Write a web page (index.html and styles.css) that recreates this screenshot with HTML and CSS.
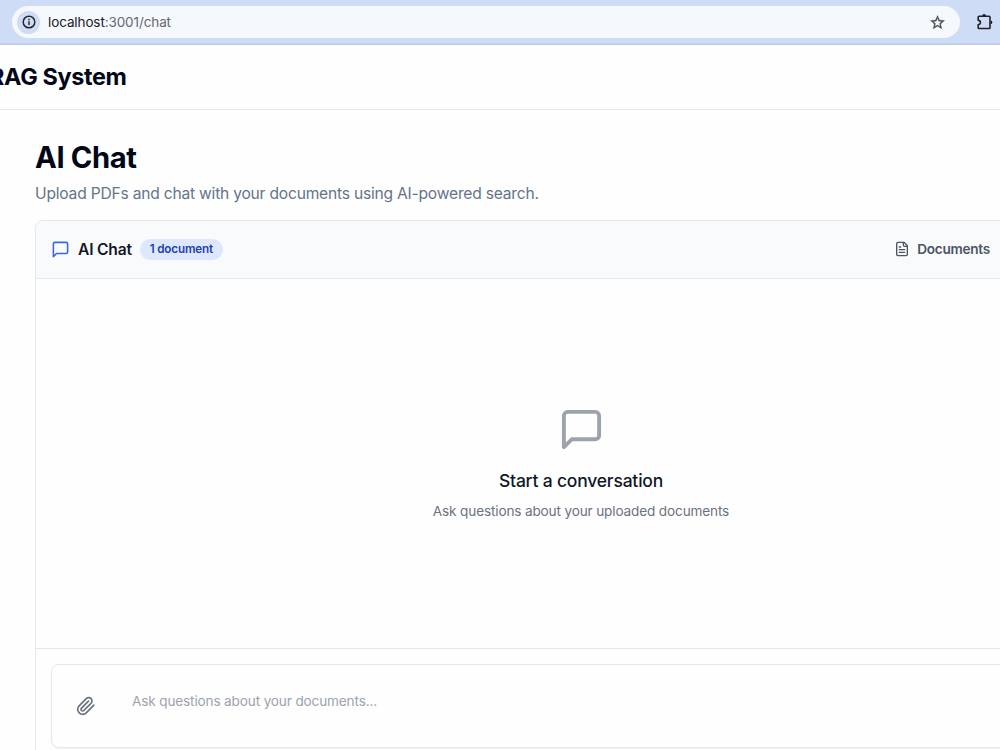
FILE: index.html
```html
<!DOCTYPE html>
<html lang="en">

<head>
    <meta charset="utf-8">
    <title>RAG System</title>
    <link rel="stylesheet" href="styles.css">
</head>

<body>

    <div class="toolbar">
        <div class="address">
            <span class="info">
                <svg width="14" height="14" viewBox="0 0 14 14" fill="none" stroke="#26282c" stroke-width="1.5">
                    <circle cx="7" cy="7" r="5.8" />
                    <path d="M7 6.3v3.600M7 3.800v1.500" />
                </svg>
            </span>
            <span class="url"><b>localhost</b>:3001/chat</span>
            <svg class="star" width="17" height="17" viewBox="0 0 24 24" fill="#4b4e53" stroke="#4b4e53" stroke-width=".4">
                <path d="M22 9.24l-7.19-.62L12 2 9.19 8.63 2 9.24l5.46 4.73L5.82 21 12 17.27 18.18 21l-1.63-7.03L22 9.24zM12 15.4l-3.76 2.27 1-4.28-3.32-2.88 4.38-.38L12 6.1l1.71 4.04 4.38.38-3.32 2.88 1 4.28L12 15.4z" />
            </svg>
        </div>
        <svg class="extensions" width="18" height="18" viewBox="0 0 18 18">
            <path d="M3 3.2h10.2q.8 0 .8.8v10.700q0 .8-.8.8H3q-.8 0-.8-.8v-2.900c1.500-.3 2.200-1.100 2.200-2.200S3.700 7.400 2.200 7.100V4q0-.8.8-.8z" fill="none" stroke="#202226" stroke-width="1.6" />
            <path d="M6.200 2.900a1.900 1.900 0 0 1 3.800 0zM14.500 7.400a1.900 1.900 0 0 1 0 3.800z" fill="#202226" />
        </svg>
    </div>

    <header class="site-header">
        <span class="brand">RAG System</span>
    </header>

    <main class="page">
        <h1>AI Chat</h1>
        <p class="lead">Upload PDFs and chat with your documents using AI-powered search.</p>

        <section class="chat">
            <div class="chat-header">
                <svg class="icon-chat" width="19" height="19" viewBox="0 0 24 24">
                    <path d="M21 15a2 2 0 0 1-2 2H7l-4 4V5a2 2 0 0 1 2-2h14a2 2 0 0 1 2 2z" />
                </svg>
                <h2>AI Chat</h2>
                <span class="badge">1 document</span>
                <button class="documents" type="button">
                    <svg width="16" height="16" viewBox="0 0 24 24">
                        <path d="M15 2H6a2 2 0 0 0-2 2v16a2 2 0 0 0 2 2h12a2 2 0 0 0 2-2V7Z" />
                        <path d="M14 2v4a2 2 0 0 0 2 2h4M10 9H8M16 13H8M16 17H8" />
                    </svg>
                    <span>Documents</span>
                </button>
            </div>

            <div class="messages">
                <svg class="icon-empty" width="47" height="47" viewBox="0 0 24 24">
                    <path d="M21 15a2 2 0 0 1-2 2H7l-4 4V5a2 2 0 0 1 2-2h14a2 2 0 0 1 2 2z" />
                </svg>
                <h3>Start a conversation</h3>
                <p>Ask questions about your uploaded documents</p>
            </div>

            <div class="composer">
                <div class="input-box">
                    <svg class="icon-clip" width="20" height="20" viewBox="0 0 24 24">
                        <path d="m21.440 11.050-9.190 9.190a6 6 0 0 1-8.490-8.490l8.570-8.570A4 4 0 1 1 18 8.840l-8.590 8.570a2 2 0 0 1-2.830-2.830l8.490-8.480" />
                    </svg>
                    <span class="placeholder">Ask questions about your documents...</span>
                </div>
            </div>
        </section>
    </main>

</body>

</html>
```
FILE: styles.css
```css
* {
    box-sizing: border-box;
    margin: 0;
    padding: 0;
}

body {
    width: 1000px;
    height: 750px;
    overflow: hidden;
    background: #fefefe;
    font-family: Inter, "Liberation Sans", sans-serif;
    color: #020817;
}

svg {
    display: block;
    flex-shrink: 0;
}

/* browser bar */
.toolbar {
    display: flex;
    align-items: center;
    height: 45px;
    padding: 1px 6px 0 12px;
    background: #cfdcf6;
    border-bottom: 2px solid #c1cee8;
}

.address {
    display: flex;
    align-items: center;
    width: 948px;
    height: 32px;
    padding: 0 14px 0 5px;
    border-radius: 16px;
    background: #f5f8fd;
}

.info {
    display: flex;
    align-items: center;
    justify-content: center;
    width: 23px;
    height: 23px;
    border-radius: 50%;
    background: #cfdcf6;
}

.url {
    margin-left: 8px;
    font-size: 13.5px;
    letter-spacing: -0.11px;
    color: #66696e;
}

.url b {
    font-weight: 400;
    color: #202124;
}

.star {
    margin-left: auto;
}

.extensions {
    margin-left: 16px;
}

/* app header */
.site-header {
    display: flex;
    align-items: center;
    height: 65px;
    padding-bottom: 2px;
    border-bottom: 1px solid #e2e8f0;
}

.brand {
    margin-left: -11px;
    font-size: 23.4px;
    font-weight: 700;
    letter-spacing: -0.35px;
    white-space: nowrap;
}

.page {
    padding: 30px 0 0 35px;
}

h1 {
    font-size: 29.2px;
    line-height: 35px;
    font-weight: 700;
    letter-spacing: -0.4px;
}

.lead {
    margin-top: 7px;
    font-size: 15.6px;
    line-height: 23px;
    letter-spacing: -0.21px;
    color: #64748b;
}

/* chat card, runs past the right edge */
.chat {
    width: 1092px;
    height: 620px;
    margin-top: 15px;
    border: 1px solid #e2e8f0;
    border-radius: 8px;
    overflow: hidden;
}

.chat-header {
    display: flex;
    align-items: center;
    height: 58px;
    padding: 0 136px 0 15px;
    background: #f9fafc;
    border-bottom: 1px solid #e2e8f0;
}

.chat svg {
    fill: none;
    stroke: currentColor;
    stroke-width: 2;
    stroke-linecap: round;
    stroke-linejoin: round;
}

.icon-chat {
    color: #3b66e8;
}

.chat-header h2 {
    margin-left: 8px;
    font-size: 15.6px;
    font-weight: 600;
    letter-spacing: -0.2px;
    color: #111827;
}

.badge {
    margin-left: 8px;
    padding: 0 10px;
    border-radius: 11px;
    background: #dde8fc;
    color: #2440af;
    font-size: 11.7px;
    line-height: 21px;
    font-weight: 600;
    letter-spacing: -0.18px;
}

.documents {
    display: flex;
    align-items: center;
    gap: 7px;
    margin-left: auto;
    padding-bottom: 1px;
    border: 0;
    background: none;
    color: #4b5563;
    font: 600 13.6px Inter, "Liberation Sans", sans-serif;
    letter-spacing: -0.26px;
}

.messages {
    display: flex;
    flex-direction: column;
    align-items: center;
    height: 369px;
    padding-top: 127px;
}

.messages h3 {
    margin-top: 14px;
    font-size: 17.5px;
    line-height: 27px;
    font-weight: 500;
    letter-spacing: -0.2px;
    color: #111827;
}

.messages p {
    margin-top: 7px;
    font-size: 13.6px;
    line-height: 20px;
    letter-spacing: -0.15px;
    color: #6b7280;
}

.icon-empty {
    color: #9ca3af;
}

.composer {
    padding: 15px;
    border-top: 1px solid #e2e8f0;
}

.input-box {
    display: flex;
    height: 84px;
    padding: 26px 24px;
    border: 1px solid #e5e7eb;
    border-radius: 8px;
    box-shadow: 0 1px 2px rgba(0, 0, 0, 0.05);
}

.icon-clip {
    margin-top: 5px;
    color: #6b7280;
}

.placeholder {
    margin-left: 36px;
    font-size: 13.6px;
    line-height: 20px;
    letter-spacing: -0.15px;
    color: #9ca3af;
}
```
